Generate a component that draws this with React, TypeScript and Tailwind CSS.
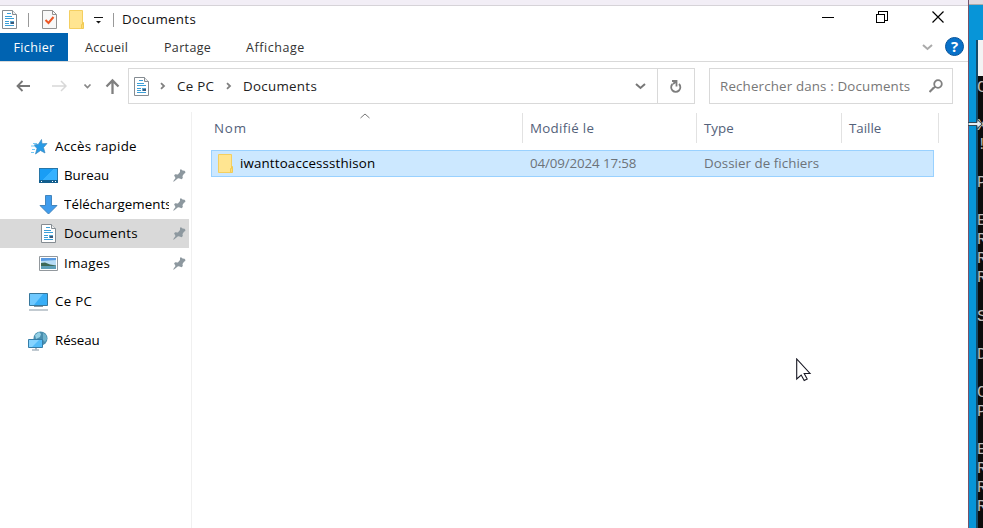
import type { ReactNode } from 'react';

function DocumentIcon({ className = '' }: { className?: string }) {
  return (
    <svg className={`shrink-0 ${className}`} width="15" height="19" viewBox="0 0 15 19" fill="none">
      <path d="M.5.5h10l4 4v14H.5z" fill="#fff" stroke="#858c92" />
      <path d="M10.5.5v4h4" fill="#eee" stroke="#858c92" />
      <path d="M5 3.5h4M3 6.500h7M3 8.500h9M3 11.500h4M3 13.500h4M3 15.500h9" stroke="#3b9fd8" />
      <path d="M8 11h4v3H8z" fill="#5aa5cf" />
      <path d="M9 12h3v2H9z" fill="#3b5878" />
    </svg>
  );
}

function FolderIcon() {
  return (
    <svg className="shrink-0" width="17" height="20" viewBox="0 0 17 20" fill="none">
      <path d="M1.500.5h13v18h-13z" fill="#ffe591" stroke="#f4cf60" />
      <path d="M14.500 12.500h1v6h-2v-4h1z" fill="#ffdc70" stroke="#f0ca55" />
    </svg>
  );
}

function PinIcon() {
  return (
    <svg className="shrink-0" width="13" height="13" viewBox="0 0 13 13" fill="#8d989f">
      <path d="M7 .5h1.500l1 1 2 .3.8 1V4l-1.300.8-1.500 2.200.3 2-1.200 1.200-1.900-.8L5 9.300 1 12.500H0L2.500 9l-.8-1.500-.6-1 1-1.200 2.800.1L7 3z" />
    </svg>
  );
}

function Chevron({ className = '' }: { className?: string }) {
  return (
    <svg className={`shrink-0 ${className}`} width="11" height="7" viewBox="0 0 11 7" fill="none" stroke="currentColor">
      <path d="m1 1 4.500 4L10 1" strokeWidth="2" />
    </svg>
  );
}

function Crumb() {
  return (
    <svg className="shrink-0 text-[#808080]" width="6" height="8" viewBox="0 0 6 8" fill="none" stroke="currentColor" strokeWidth="1.800">
      <path d="m1 1.200 3 2.800-3 2.800" />
    </svg>
  );
}

function QuickIcon() {
  return (
    <svg width="18" height="16" viewBox="0 0 18 16">
      <path d="m11.500.5.5 4.200 5-.2-3.500 4 1.500 5.500-4.500-2.500-5 3.500 1.500-5.500L4 6l4.500-.8z" fill="#289be6" stroke="#3c88bf" strokeWidth=".7" />
      <path d="M3 4.500h4M1 7h4M2 10.500h3M1 13.500h3" stroke="#73c8f5" />
    </svg>
  );
}

function DesktopIcon() {
  return (
    <svg width="19" height="15" viewBox="0 0 19 15" shapeRendering="crispEdges">
      <path d="M.5.5h18v14H.5z" fill="#199df5" stroke="#2876a7" />
      <path d="M3 12 14 1h4v11z" fill="#35b1ff" />
      <path d="M0 12h19v3H0z" fill="#125e8e" />
      <path d="M2 13.500h1m10 0h1m2 0h1" stroke="#fff" />
    </svg>
  );
}

function DownloadIcon() {
  return (
    <svg width="19" height="20" viewBox="0 0 19 20">
      <path d="M6.500.5h6v10h5.500L9.500 19 1 10.500h5.500z" fill="#3f9ced" stroke="#4385bd" />
    </svg>
  );
}

function ImagesIcon() {
  return (
    <svg width="19" height="15" viewBox="0 0 19 15">
      <path d="M.5.5h18v14H.5z" fill="#fff" stroke="#92989d" />
      <path d="M2 2h15v10H2z" fill="#b7dcf5" />
      <path d="M2 2h15v2L2 5z" fill="#5799e2" />
      <path d="m2 7 4-.5 5 2 6 1v1.500H2z" fill="#3e6957" />
      <path d="M2 10h15v3H2z" fill="#5d9fb8" />
    </svg>
  );
}

function ComputerIcon() {
  return (
    <svg width="19" height="18" viewBox="0 0 19 18">
      <path d="M.5.5h18v12H.5z" fill="#38aef7" stroke="#37779c" />
      <path d="M1 1h13L5 12H1z" fill="#6fc9ff" />
      <path d="M5 13.500h9M0 17h19" stroke="#8798a4" />
    </svg>
  );
}

function NetworkIcon() {
  return (
    <svg width="20" height="20" viewBox="0 0 20 20">
      <circle cx="12.500" cy="7.500" r="7" fill="#498eae" />
      <path d="M7 4 11 1l2 2-1 3-4 2z" fill="#95d0e5" />
      <path d="m15 2 3 2 1 4-2 3-2-2z" fill="#6fb3cc" />
      <path d="M.5 8.500h14v8H.5z" fill="#55bdf8" stroke="#367da7" />
      <path d="M1 9h10l-7 7H1z" fill="#86d4ff" />
      <path d="M4 19h7" stroke="#8396a3" />
      <path d="M7 17h2v2H7z" fill="#acbac4" />
    </svg>
  );
}

function TitleBar() {
  return (
    <div className="flex h-[27px] shrink-0 items-center">
      <DocumentIcon className="ml-[2px]" />
      <span className="ml-[11px] h-[14px] w-px bg-[#999]" />
      <svg className="ml-[13px]" width="15" height="19" viewBox="0 0 15 19" fill="none">
        <path d="M.5.5h10l4 4v14H.5z" fill="#f8f8f8" stroke="#929292" />
        <path d="M10.500.5v4h4" stroke="#929292" />
        <path d="m3.500 10 3 3 5-6" stroke="#ed5826" strokeWidth="2" />
      </svg>
      <span className="ml-[11px]"><FolderIcon /></span>
      <svg className="ml-[9px]" width="9" height="8" viewBox="0 0 9 8">
        <path d="M0 1h9v1H0zM2 5h5L4.500 7.500z" fill="#151515" />
      </svg>
      <span className="ml-[10px] h-[14px] w-px bg-[#999]" />
      <span className="ml-[8px] tracking-[0.3px] text-[#111]">Documents</span>
      <div className="ml-auto mr-[24px] flex h-full items-start gap-[42px] pt-[5px]">
        <svg width="12" height="12"><path d="M0 6.500h12" stroke="#000" /></svg>
        <svg width="12" height="12" fill="none" stroke="#000" shapeRendering="crispEdges">
          <path d="M2.500 3V.5h9v9H9M.5 3.500h8v8h-8z" />
        </svg>
        <svg className="ml-[2px]" width="12" height="12" stroke="#000" strokeWidth="1.200"><path d="m.5.5 11 11m0-11-11 11" /></svg>
      </div>
    </div>
  );
}

function RibbonTabs() {
  return (
    <div className="flex h-[29px] shrink-0 items-center border-b border-[#d9d9d9] text-[12.5px] tracking-[0.35px] text-[#333]">
      <div className="flex h-full w-[68px] items-center justify-center bg-[#0063b1] text-white">Fichier</div>
      <span className="ml-[17px] w-[79px]">Accueil</span>
      <span className="w-[82px]">Partage</span>
      <span className="tracking-[0.55px]">Affichage</span>
      <div className="ml-auto mr-1 flex items-center gap-[12px] text-[#aaa]">
        <Chevron />
        <div className="mb-[2px] flex size-[19px] items-center justify-center rounded-full border border-[#07539a] bg-[#0871c9] text-[15px] leading-none font-bold tracking-normal text-white">?</div>
      </div>
    </div>
  );
}

function AddressBar() {
  return (
    <div className="flex h-[50px] shrink-0 items-start pt-[6px]">
      <div className="flex h-[36px] w-[128px] items-center pl-[16px]">
        <svg width="14" height="12" fill="none" stroke="#777" strokeWidth="1.800"><path d="M14 6H1.500m5-5-5 5 5 5" /></svg>
        <svg className="ml-[22px]" width="15" height="12" fill="none" stroke="#d8d8d8" strokeWidth="1.500"><path d="M0 6h14M9 1l5 5-5 5" /></svg>
        <svg className="ml-[17px]" width="8" height="5" fill="none" stroke="#888" strokeWidth="1.600"><path d="m.5.5 3 3 3-3" /></svg>
        <svg className="ml-[13px]" width="15" height="16" fill="none" stroke="#808080" strokeWidth="2.300"><path d="M7.500 16V3m-6 5.500 6-6 6 6" /></svg>
      </div>
      <div className="flex h-[36px] w-[567px] items-center border border-[#d9d9d9]">
        <DocumentIcon className="ml-[5px]" />
        <span className="ml-[11px] flex"><Crumb /></span>
        <span className="ml-[11px] w-[49px] tracking-[0.3px]">Ce PC</span>
        <Crumb />
        <span className="ml-[11px] tracking-[0.3px]">Documents</span>
        <div className="ml-auto flex h-full w-[38px] items-center border-r border-[#d9d9d9] pl-[15px] text-[#777]"><Chevron /></div>
        <div className="flex h-full w-[36px] items-center justify-center">
          <svg width="12" height="13" fill="none" stroke="#7d7d7d" strokeWidth="1.800">
            <path d="M2.500 4a4.600 4.600 0 1 0 6.500 0M2 1h4.500v5.500M6.500 1 3 4" />
          </svg>
        </div>
      </div>
      <div className="ml-[14px] flex h-[36px] w-[244px] items-center border border-[#d9d9d9] pl-[10px] text-[#777]">
        <span className="tracking-[0.160px]">Rechercher dans : Documents</span>
        <svg className="mr-[9px] ml-auto" width="14" height="14" fill="none" stroke="#808080">
          <circle cx="9" cy="5" r="3.800" strokeWidth="1.800" /><path d="m6.500 7.500-2.500 2" strokeWidth="2" /><path d="m4.500 9-4 4" strokeWidth="2.200" />
        </svg>
      </div>
    </div>
  );
}

interface NavItemProps {
  icon: ReactNode;
  label: string;
  nested?: boolean;
  pinned?: boolean;
  selected?: boolean;
  spacing?: string;
}

function NavItem({ icon, label, nested = false, pinned = false, selected = false, spacing = 'tracking-[0.28px]' }: NavItemProps) {
  return (
    <div className={`flex h-[29px] w-[189px] shrink-0 items-center ${nested ? 'pl-[39px]' : 'pl-[29px]'} ${selected ? 'bg-[#d9d9d9]' : ''}`}>
      <span className={`flex shrink-0 items-center justify-center ${nested ? 'w-[19px]' : 'w-[20px]'}`}>{icon}</span>
      <span className={`ml-[6px] min-w-0 overflow-hidden whitespace-nowrap ${nested ? 'w-[105px]' : ''} ${spacing}`}>{label}</span>
      {pinned && <span className="ml-[4px] shrink-0"><PinIcon /></span>}
    </div>
  );
}

function Sidebar() {
  return (
    <nav className="flex w-[192px] shrink-0 flex-col border-r border-[#f0f0f0] pt-[20px] text-black">
      <NavItem icon={<QuickIcon />} label="Accès rapide" />
      <NavItem icon={<DesktopIcon />} label="Bureau" nested pinned spacing="tracking-normal" />
      <NavItem icon={<DownloadIcon />} label="Téléchargements" nested pinned spacing="tracking-[0.05px]" />
      <NavItem icon={<DocumentIcon />} label="Documents" nested pinned selected />
      <div className="mt-px"><NavItem icon={<ImagesIcon />} label="Images" nested pinned /></div>
      <div className="mt-[9px]"><NavItem icon={<span className="-ml-px"><ComputerIcon /></span>} label="Ce PC" /></div>
      <div className="mt-[10px]"><NavItem icon={<span className="-ml-[2px]"><NetworkIcon /></span>} label="Réseau" spacing="-tracking-[0.1px]" /></div>
    </nav>
  );
}

function FileList() {
  return (
    <main className="relative min-w-0 flex-1 pl-[19px]">
      <svg className="absolute top-[1px] left-[168px]" width="10" height="6" fill="none" stroke="#777"><path d="m.5 5 4.500-4 4.500 4" /></svg>
      <div className="mt-[1px] flex h-[30px] items-center text-[#53617a]">
        <div className="flex h-full w-[312px] items-center border-r border-[#e2e2e2] pl-[3px] tracking-[0.8px]">Nom</div>
        <div className="flex h-full w-[174px] items-center border-r border-[#e2e2e2] pl-[7px] tracking-[0.3px]">Modifié le</div>
        <div className="flex h-full w-[145px] items-center border-r border-[#e2e2e2] pl-[7px]">Type</div>
        <div className="flex h-full w-[97px] items-center border-r border-[#e2e2e2] pl-[7px]">Taille</div>
      </div>
      <div className="mt-[7px] flex h-[27px] w-[723px] items-center border border-[#99d1ff] bg-[#cce8ff] text-[#6d7379]">
        <div className="flex w-[318px] items-center pl-[5px] text-black"><FolderIcon /><span className="ml-[6px] tracking-[0.150px]">iwanttoaccesssthison</span></div>
        <span className="w-[174px] -tracking-[0.12px]">04/09/2024 17:58</span>
        <span className="tracking-[0.05px]">Dossier de fichiers</span>
      </div>
    </main>
  );
}

const consoleLines = ['C', '', 'X', '!', '', 'P', '', 'E', 'R', 'R', 'R', '', 'S', '', 'D', '', 'C', 'P', '', 'E', 'R', 'R', 'R'];

function Background() {
  return (
    <div className="flex h-full w-[15px] shrink-0 flex-col overflow-hidden border-l border-[#76536b] bg-[#0795d8]">
      <div className="h-[5px] shrink-0 border-b border-[#aaa] bg-[#ded9df]" />
      <div className="mt-[35px] ml-[7px] flex-1 border-l-2 border-[#164b68] bg-[#0c0c0c]">
        <div className="mb-[3px] h-[36px] bg-[#f3f3f3]" />
        {consoleLines.map((line, i) => (
          <div key={i} className="-ml-px h-[19.05px] w-[10px] font-['Liberation_Mono',monospace] text-[16px] leading-[19.05px] text-[#bbb]">{line}</div>
        ))}
      </div>
    </div>
  );
}

export default function App() {
  return (
    <div className="relative flex h-[528px] w-[983px] overflow-hidden bg-white font-['Open_Sans','Noto_Sans',sans-serif] text-[13.33px] leading-[19px] text-[#222]">
      <div className="flex w-[968px] shrink-0 flex-col">
        <div className="h-[6px] shrink-0 border-b border-[#d6d3d8] bg-[#f2eef6]" />
        <TitleBar />
        <RibbonTabs />
        <AddressBar />
        <div className="flex min-h-0 flex-1"><Sidebar /><FileList /></div>
      </div>
      <Background />
      <svg className="absolute top-[119px] left-[968px]" width="15" height="10" viewBox="0 0 15 10">
        <path d="M0 3.500h9V.5l5 4.500-5 4.500v-3H0z" fill="#e8edf2" stroke="#334957" />
      </svg>
      <svg className="absolute top-[358px] left-[796px]" width="16" height="24" viewBox="0 0 16 24">
        <path d="M.7 1v20l4.500-4 3 5.500 3-1.500-3-5.500H14z" fill="#fff" stroke="#171723" strokeWidth="1.100" />
      </svg>
    </div>
  );
}
